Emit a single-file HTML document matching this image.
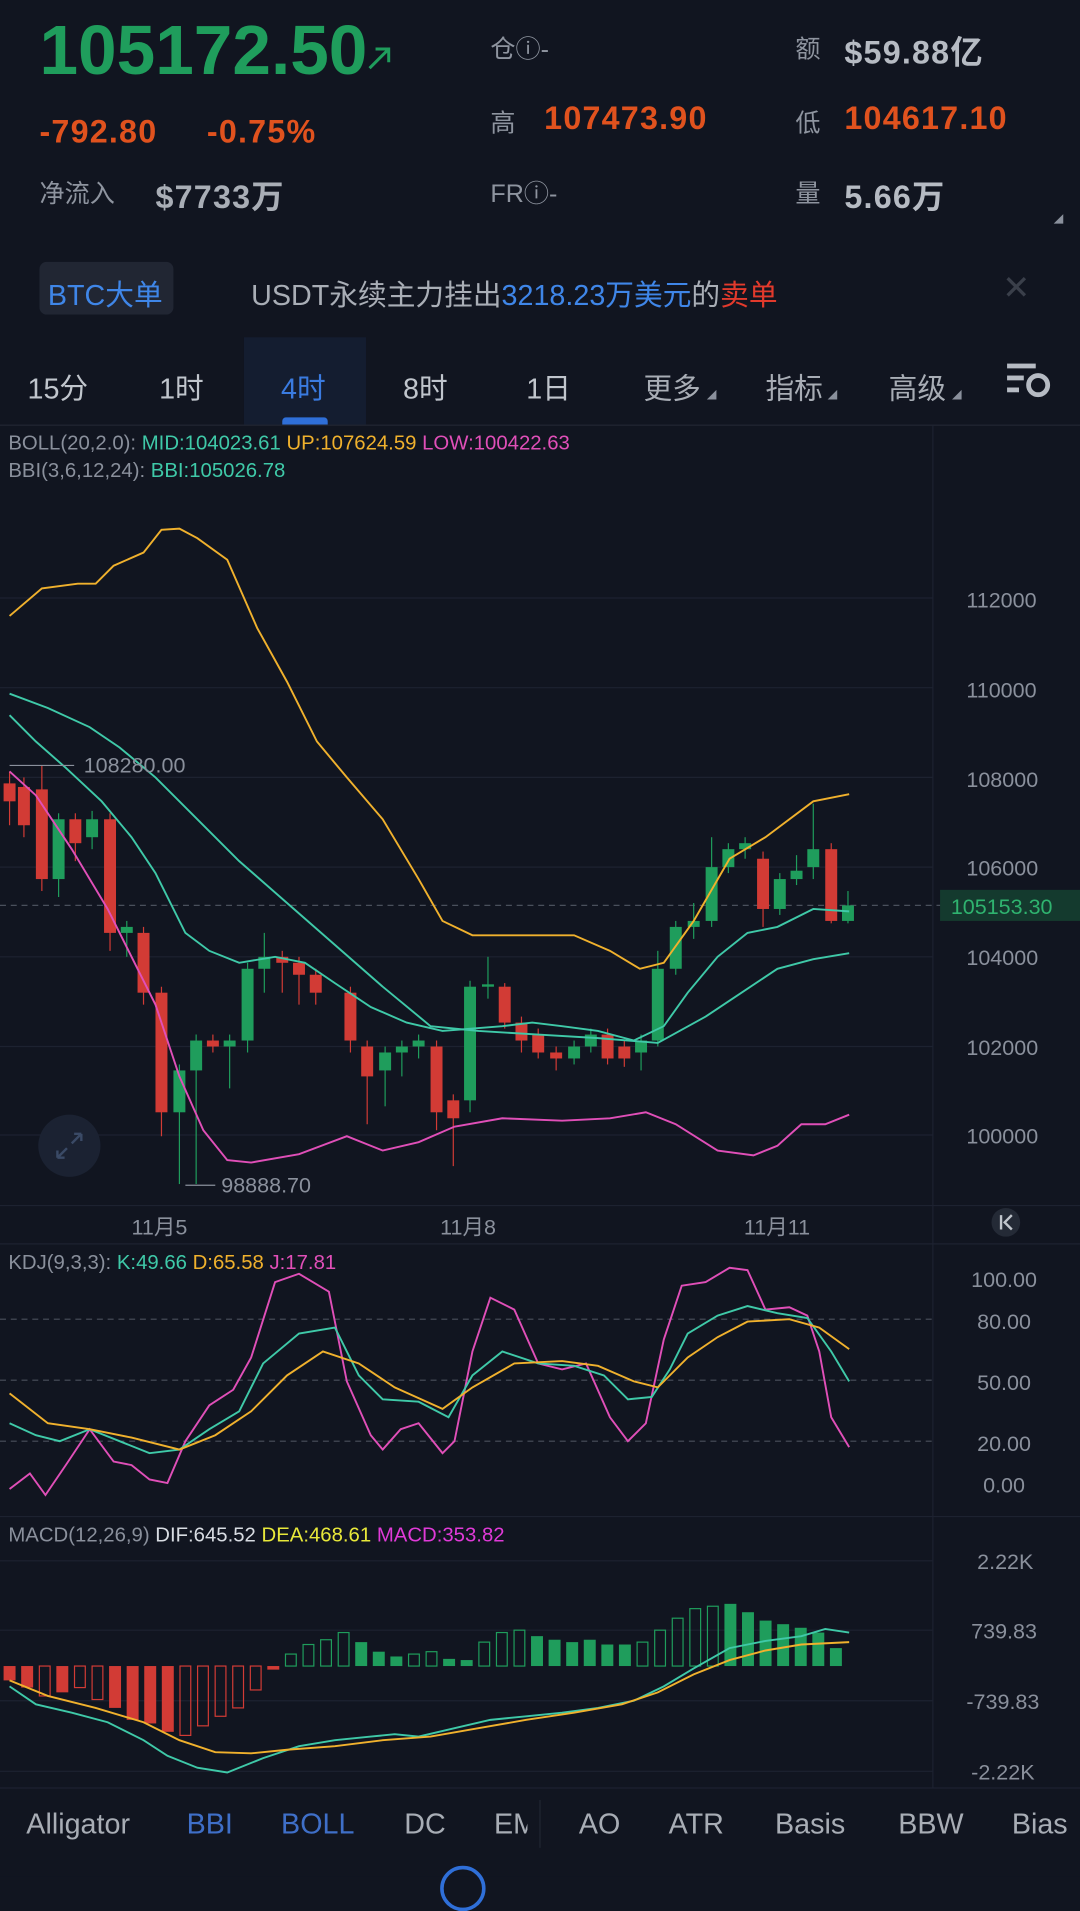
<!DOCTYPE html>
<html><head><meta charset="utf-8"><style>
html,body{margin:0;padding:0;background:#111520;width:1080px;height:1876px;overflow:hidden}
#w{position:absolute;left:0;top:0;width:903px;height:1569px;transform:scale(1.19601);transform-origin:0 0;background:#111520;font-family:"Liberation Sans","Noto Sans CJK SC",sans-serif;color:#8a909c}
.a{position:absolute;white-space:nowrap}
.g{color:#1f9d5c}.o{color:#e0521e}.l{color:#8e949f}.w{color:#c6cbd3}
.n{font-size:27px;font-weight:bold;letter-spacing:1px}
.tab{position:absolute;top:305px;font-size:24px;color:#c0c5cc}
.bt{position:absolute;top:1512px;font-size:24px;color:#a8adb5}
</style></head><body><div id="w">
<div class="a g" style="left:33px;top:9px;font-size:58px;font-weight:bold;letter-spacing:0px">105172.50</div>
<svg class="a" style="left:306px;top:38px" width="22" height="22"><path d="M3 19L19 3M8 3H19V14" stroke="#1f9d5c" stroke-width="2.5" fill="none"/></svg>
<div class="a o n" style="left:33px;top:95px">-792.80</div>
<div class="a o n" style="left:173px;top:95px">-0.75%</div>
<div class="a l" style="left:33px;top:146px;font-size:21px">净流入</div>
<div class="a n" style="left:130px;top:143px;color:#a9aeb6">$7733万</div>
<div class="a l" style="left:410px;top:25px;font-size:21px">仓ⓘ-</div>
<div class="a l" style="left:410px;top:87px;font-size:21px">高</div>
<div class="a o n" style="left:455px;top:84px">107473.90</div>
<div class="a l" style="left:410px;top:146px;font-size:21px">FRⓘ-</div>
<div class="a l" style="left:665px;top:25px;font-size:21px">额</div>
<div class="a n" style="left:706px;top:22px;color:#b6bbc3">$59.88亿</div>
<div class="a l" style="left:665px;top:87px;font-size:21px">低</div>
<div class="a o n" style="left:706px;top:84px">104617.10</div>
<div class="a l" style="left:665px;top:146px;font-size:21px">量</div>
<div class="a n" style="left:706px;top:143px;color:#b6bbc3">5.66万</div>
<svg class="a" style="left:880px;top:178px" width="10" height="10"><path d="M9 1V9H1Z" fill="#8a909c"/></svg>
<div class="a" style="left:33px;top:219px;width:112px;height:44px;background:#212633;border-radius:6px"></div>
<div class="a" style="left:40px;top:227px;font-size:24px;color:#3f86e8">BTC大单</div>
<div class="a" style="left:210px;top:227px;font-size:24px;color:#a9aeb6">USDT永续主力挂出<span style="color:#3f86e8">3218.23万美元</span>的<span style="color:#e23a2c">卖单</span></div>
<div class="a" style="left:838px;top:224px;font-size:28px;color:#3a3f4a">✕</div>
<div class="a" style="left:204px;top:282px;width:102px;height:73px;background:#141d30"></div>
<div class="a" style="left:236px;top:349px;width:38px;height:6px;background:#2f6fd8;border-radius:3px 3px 0 0"></div>
<div class="tab" style="left:23px">15分</div><div class="tab" style="left:133px">1时</div>
<div class="tab" style="left:235px;color:#3a7be0">4时</div><div class="tab" style="left:337px">8时</div>
<div class="tab" style="left:440px">1日</div><div class="tab" style="left:538px;color:#a8adb5">更多</div>
<div class="tab" style="left:640px;color:#a8adb5">指标</div><div class="tab" style="left:743px;color:#a8adb5">高级</div>
<svg class="a" style="left:590px;top:325px" width="220" height="10"><path d="M9 1V9H1Z M110 1V9H102Z M214 1V9H206Z" fill="#8a909c"/></svg>
<svg class="a" style="left:842px;top:302px" width="38" height="34"><rect x="0" y="2" width="24" height="4" fill="#b6bbc3"/><rect x="0" y="12" width="14" height="4" fill="#b6bbc3"/><rect x="0" y="22" width="10" height="4" fill="#b6bbc3"/><circle cx="26" cy="20" r="8" fill="none" stroke="#b6bbc3" stroke-width="4"/></svg>
<div class="a" style="left:0;top:355px;width:903px;height:1px;background:#222733"></div>

<svg class="a" style="left:0;top:0" width="903" height="1569">
<g stroke="#1d2230" stroke-width="1">
<line x1="0" y1="500" x2="780" y2="500"/><line x1="0" y1="575" x2="780" y2="575"/><line x1="0" y1="650" x2="780" y2="650"/><line x1="0" y1="725" x2="780" y2="725"/><line x1="0" y1="800" x2="780" y2="800"/><line x1="0" y1="875" x2="780" y2="875"/><line x1="0" y1="949" x2="780" y2="949"/>
<line x1="780" y1="356" x2="780" y2="1495"/><line x1="0" y1="1008" x2="903" y2="1008"/><line x1="0" y1="1040" x2="903" y2="1040"/><line x1="0" y1="1268" x2="903" y2="1268"/>
<line x1="0" y1="1305" x2="780" y2="1305"/><line x1="0" y1="1363" x2="780" y2="1363"/><line x1="0" y1="1422" x2="780" y2="1422"/><line x1="0" y1="1481" x2="780" y2="1481"/><line x1="0" y1="1495" x2="903" y2="1495"/>
</g>
<g stroke="#4a505c" stroke-dasharray="5,4"><line x1="0" y1="757" x2="790" y2="757"/><line x1="0" y1="1103" x2="780" y2="1103"/><line x1="0" y1="1154" x2="780" y2="1154"/><line x1="0" y1="1205" x2="780" y2="1205"/></g>
<g id="cd"></g>
<g fill="none" stroke-width="1.6">
<polyline stroke="#f0b12d" points="8,515 35,492 65,488 80,488 95,473 120,462 135,443 150,442 165,450 190,468 215,525 240,570 265,620 290,650 320,685 350,735 370,770 395,782 430,782 480,782 510,795 535,810 555,805 580,770 610,718 640,700 680,670 710,664"/>
<polyline stroke="#3fc9a8" points="8,580 40,592 75,608 100,625 130,650 160,680 200,720 240,755 280,790 320,825 360,858 400,862 450,865 500,868 550,872 590,850 620,830 650,810 680,802 710,797"/>
<polyline stroke="#3fc9a8" points="8,598 30,620 55,642 85,670 110,700 130,730 155,780 175,795 200,805 230,800 255,805 280,822 310,842 340,855 370,862 395,860 420,858 445,855 470,858 500,862 530,870 555,858 575,830 600,800 625,780 650,775 680,760 710,762"/>
<polyline stroke="#e04fb8" points="8,645 30,665 60,710 90,760 115,810 130,840 150,900 170,945 190,970 210,972 250,965 290,950 320,962 350,955 380,942 420,935 470,937 510,935 540,930 565,940 600,962 630,966 650,958 670,940 690,940 710,932"/>
<polyline stroke="#e04fb8" points="8,1245 25,1232 38,1250 55,1225 75,1195 95,1222 110,1225 125,1237 140,1240 155,1205 175,1175 195,1162 210,1135 230,1072 250,1065 275,1080 290,1155 310,1200 320,1212 335,1195 350,1190 370,1215 380,1205 395,1130 410,1085 430,1095 450,1140 470,1145 490,1140 510,1185 525,1205 540,1190 555,1120 570,1075 590,1072 610,1060 625,1062 640,1095 660,1093 675,1100 685,1130 695,1185 710,1210"/>
<polyline stroke="#3fc9a8" points="8,1190 30,1200 50,1205 75,1195 100,1205 125,1215 150,1212 175,1195 200,1180 220,1140 250,1115 280,1110 300,1150 320,1170 350,1172 375,1185 395,1150 420,1130 450,1140 480,1142 505,1150 525,1170 545,1168 560,1145 575,1115 600,1100 625,1092 650,1098 675,1102 695,1130 710,1155"/>
<polyline stroke="#f0b12d" points="8,1165 40,1190 75,1195 110,1202 150,1212 180,1200 210,1180 240,1150 270,1130 300,1140 330,1160 370,1178 395,1160 430,1140 470,1138 500,1142 530,1155 550,1160 575,1135 600,1118 625,1105 660,1103 685,1110 710,1128"/>
</g>
<g id="mb"></g>
<g fill="none" stroke-width="1.6">
<polyline stroke="#3fc9a8" points="8,1410 30,1425 60,1432 90,1440 120,1455 140,1468 165,1478 190,1482 220,1470 250,1460 280,1455 310,1452 330,1450 350,1452 380,1445 410,1438 440,1435 470,1432 500,1428 530,1422 555,1410 580,1395 610,1378 640,1372 670,1368 690,1362 710,1365"/>
<polyline stroke="#f0b12d" points="8,1405 40,1418 80,1428 120,1440 150,1455 180,1465 210,1466 240,1463 280,1460 320,1455 360,1452 400,1445 440,1438 480,1432 520,1425 550,1415 580,1400 610,1388 640,1380 670,1375 710,1373"/>
</g>
<g stroke="#8a909c"><line x1="62" y1="640" x2="8" y2="640"/><line x1="180" y1="991" x2="155" y2="991"/></g>
<g font-family="Liberation Sans" font-size="18" fill="#8a909c">
<text x="808" y="508">112000</text><text x="808" y="583">110000</text><text x="808" y="658">108000</text><text x="808" y="732">106000</text><text x="808" y="807">104000</text><text x="808" y="882">102000</text><text x="808" y="956">100000</text>
<text x="70" y="646">108280.00</text><text x="185" y="997">98888.70</text>
<text x="110" y="1032">11月5</text><text x="368" y="1032">11月8</text><text x="622" y="1032">11月11</text>
<text x="812" y="1076">100.00</text><text x="817" y="1111">80.00</text><text x="817" y="1162">50.00</text><text x="817" y="1213">20.00</text><text x="822" y="1248">0.00</text>
<text x="817" y="1312">2.22K</text><text x="812" y="1370">739.83</text><text x="808" y="1429">-739.83</text><text x="812" y="1488">-2.22K</text>
</g>
<rect x="786" y="744" width="117" height="26" fill="#143a2e"/>
<text x="795" y="764" font-family="Liberation Sans" font-size="18" fill="#2fb36f">105153.30</text>
<circle cx="58" cy="958" r="26" fill="#1b2232"/>
<path d="M48 968L56 960M48 968V962M48 968H54M68 948L60 956M68 948V954M68 948H62" stroke="#3a4a66" stroke-width="2" fill="none"/>
<circle cx="841" cy="1022" r="12" fill="#242a36"/><path d="M837 1016V1028M846 1016L840 1022L846 1028" stroke="#c0c5cc" stroke-width="2" fill="none"/>
</svg>
<div class="a" style="left:7px;top:359px;font-size:17px;color:#8a909c;line-height:23px">BOLL(20,2.0): <span style="color:#3fc9a8">MID:104023.61</span> <span style="color:#f0b12d">UP:107624.59</span> <span style="color:#e04fb8">LOW:100422.63</span><br>BBI(3,6,12,24): <span style="color:#3fc9a8">BBI:105026.78</span></div>
<div class="a" style="left:7px;top:1046px;font-size:17px;color:#8a909c">KDJ(9,3,3): <span style="color:#3fc9a8">K:49.66</span> <span style="color:#f0b12d">D:65.58</span> <span style="color:#e04fb8">J:17.81</span></div>
<div class="a" style="left:7px;top:1274px;font-size:17px;color:#8a909c">MACD(12,26,9) <span style="color:#d8dce2">DIF:645.52</span> <span style="color:#e8e83a">DEA:468.61</span> <span style="color:#e03ad8">MACD:353.82</span></div>
<div class="bt" style="left:22px">Alligator</div><div class="bt" style="left:156px;color:#3f6fc8">BBI</div><div class="bt" style="left:235px;color:#3f6fc8">BOLL</div><div class="bt" style="left:338px">DC</div><div class="bt" style="left:413px;width:28px;overflow:hidden">EMA</div><div class="a" style="left:451px;top:1505px;width:1px;height:40px;background:#222733"></div><div class="bt" style="left:484px">AO</div><div class="bt" style="left:559px">ATR</div><div class="bt" style="left:648px">Basis</div><div class="bt" style="left:751px">BBW</div><div class="bt" style="left:846px">Bias</div>
<div class="a" style="left:368px;top:1560px;width:32px;height:32px;border:3px solid #2f6fd8;border-radius:50%"></div>
</div>
<script>
var C=[[8,655,670,645,690],[20,658,690,650,700],[35,660,735,640,745],[49,735,685,680,750],[63,685,705,680,720],[77,700,685,678,710],[92,685,780,680,795],[106,780,775,770,800],[120,780,830,775,840],[135,830,930,825,950],[150,930,895,890,990],[164,895,870,865,990],[178,870,875,865,880],[192,875,870,865,910],[207,870,810,805,880],[221,810,800,780,830],[236,800,805,795,830],[250,805,815,800,840],[264,815,830,810,840],[293,830,870,825,880],[307,875,900,870,940],[322,895,880,875,925],[336,880,875,870,900],[350,875,870,865,885],[365,875,930,870,945],[379,920,935,915,975],[393,920,825,820,930],[408,825,823,800,835],[422,825,855,822,860],[436,855,870,850,880],[450,865,880,860,885],[465,880,885,875,895],[480,885,875,870,890],[494,875,865,860,880],[508,865,885,860,890],[522,875,885,870,892],[536,880,870,865,895],[550,870,810,795,875],[565,810,775,770,815],[580,775,770,755,785],[595,770,725,700,775],[609,725,710,705,730],[623,710,705,700,718],[638,718,760,712,775],[652,760,735,730,765],[666,735,728,715,740],[680,725,710,672,735],[695,710,770,705,772],[709,770,757,745,772]];
var s='',i;for(i=0;i<C.length;i++){var c=C[i],up=c[2]<c[1],col=up?'#1f9d5c':'#d23b35';s+='<line x1="'+c[0]+'" x2="'+c[0]+'" y1="'+c[3]+'" y2="'+c[4]+'" stroke="'+col+'"/><rect x="'+(c[0]-5)+'" y="'+Math.min(c[1],c[2])+'" width="10" height="'+Math.max(2,Math.abs(c[1]-c[2]))+'" fill="'+col+'"/>';}
document.getElementById('cd').innerHTML=s;
var M=[-12,-18,-25,-22,-18,-28,-35,-45,-48,-55,-58,-50,-42,-35,-20,-3,10,18,22,28,20,12,8,10,12,6,5,20,28,30,25,22,20,22,18,18,20,30,40,48,50,52,45,38,35,32,28,15],H={2:1,4:1,5:1,10:1,11:1,12:1,13:1,14:1,16:1,17:1,18:1,19:1,23:1,24:1,27:1,28:1,29:1,36:1,37:1,38:1,39:1,40:1};
s='';for(i=0;i<M.length;i++){var x=3+i*14.7,v=M[i]*1.0,z=1393,col=v<0?'#d23b35':'#1f9d5c',y=v<0?z:z-v,h=Math.max(2,Math.abs(v));s+=H[i]?'<rect x="'+(x+0.5)+'" y="'+y+'" width="9" height="'+h+'" fill="none" stroke="'+col+'"/>':'<rect x="'+x+'" y="'+y+'" width="10" height="'+h+'" fill="'+col+'"/>';}
document.getElementById('mb').innerHTML=s;
</script>
</body></html>
